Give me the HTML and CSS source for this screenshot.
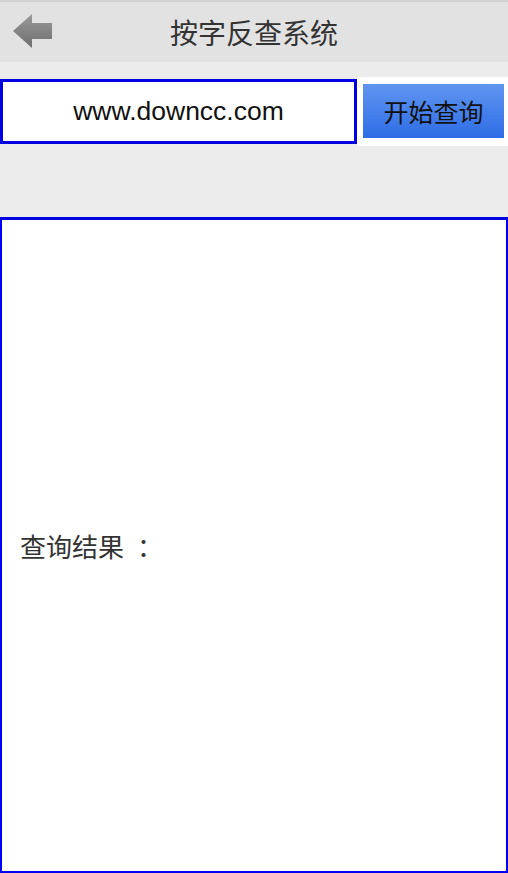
FILE: index.html
```html
<!DOCTYPE html>
<html lang="zh-CN">
<head>
<meta charset="utf-8">
<title>按字反查系统</title>
<link rel="stylesheet" href="styles.css">
</head>
<body>
<header class="topbar">
  <svg class="back" width="42" height="36" viewBox="0 0 42 36">
    <defs>
      <linearGradient id="ag" x1="0" y1="0" x2="0" y2="1">
        <stop offset="0" stop-color="#9a9a9a"/>
        <stop offset="1" stop-color="#6e6e6e"/>
      </linearGradient>
    </defs>
    <path d="M1 17 L20 0 L20 9 L40 9 L40 25 L20 25 L20 34 Z" fill="url(#ag)"/>
  </svg>
  <h1 class="title">按字反查系统</h1>
</header>
<div class="search-row">
  <div class="input-box">www.downcc.com</div>
  <div class="btn-wrap"><button class="btn">开始查询</button></div>
</div>
<div class="result-box">
  <p class="result-label">查询结果<span class="colon">：</span></p>
</div>
</body>
</html>
```
FILE: styles.css
```css
html, body {
  margin: 0;
  padding: 0;
}
body {
  width: 508px;
  height: 873px;
  background: #ececec;
  font-family: "Noto Sans CJK SC", "Noto Sans", sans-serif;
  overflow: hidden;
}
.topbar {
  position: relative;
  height: 60px;
  border-top: 2px solid #d2d2d2;
  background: #e2e2e2;
  display: flex;
  align-items: center;
  justify-content: center;
}
.back {
  position: absolute;
  left: 12px;
  top: 12px;
}
.title {
  margin: 0;
  font-size: 28px;
  font-weight: normal;
  color: #333;
  line-height: 1;
}
.search-row {
  margin-top: 15px;
  display: flex;
  align-items: flex-start;
}
.input-box {
  margin-top: 2px;
  box-sizing: border-box;
  width: 357px;
  height: 65px;
  border: 3px solid #0000e0;
  background: #fff;
  display: flex;
  align-items: center;
  justify-content: center;
  font-family: "Liberation Sans", Arial, sans-serif;
  font-size: 26.5px;
  color: #111;
}
.btn-wrap {
  flex: 1;
  height: 69px;
  background: #fff;
  box-sizing: border-box;
  padding: 7px 4px 8px 6px;
  display: flex;
}
.btn {
  flex: 1;
  border: none;
  margin: 0;
  padding: 0;
  background: linear-gradient(#6096f0, #2d6ce6);
  font-family: "Noto Sans CJK SC", sans-serif;
  font-size: 25px;
  color: #111;
}
.result-box {
  margin-top: 71px;
  box-sizing: border-box;
  height: 656px;
  border-top: 3px solid #0000e0;
  border-left: 2px solid #0000f0;
  border-right: 2px solid #0000f0;
  border-bottom: 2px solid #0000f0;
  background: #fff;
  display: flex;
  align-items: center;
  padding-left: 18px;
}
.result-label {
  margin: 0;
  font-size: 26px;
  color: #333;
}
.colon {
  display: inline-block;
  width: 26px;
  padding-left: 13px;
  box-sizing: border-box;
}
```
